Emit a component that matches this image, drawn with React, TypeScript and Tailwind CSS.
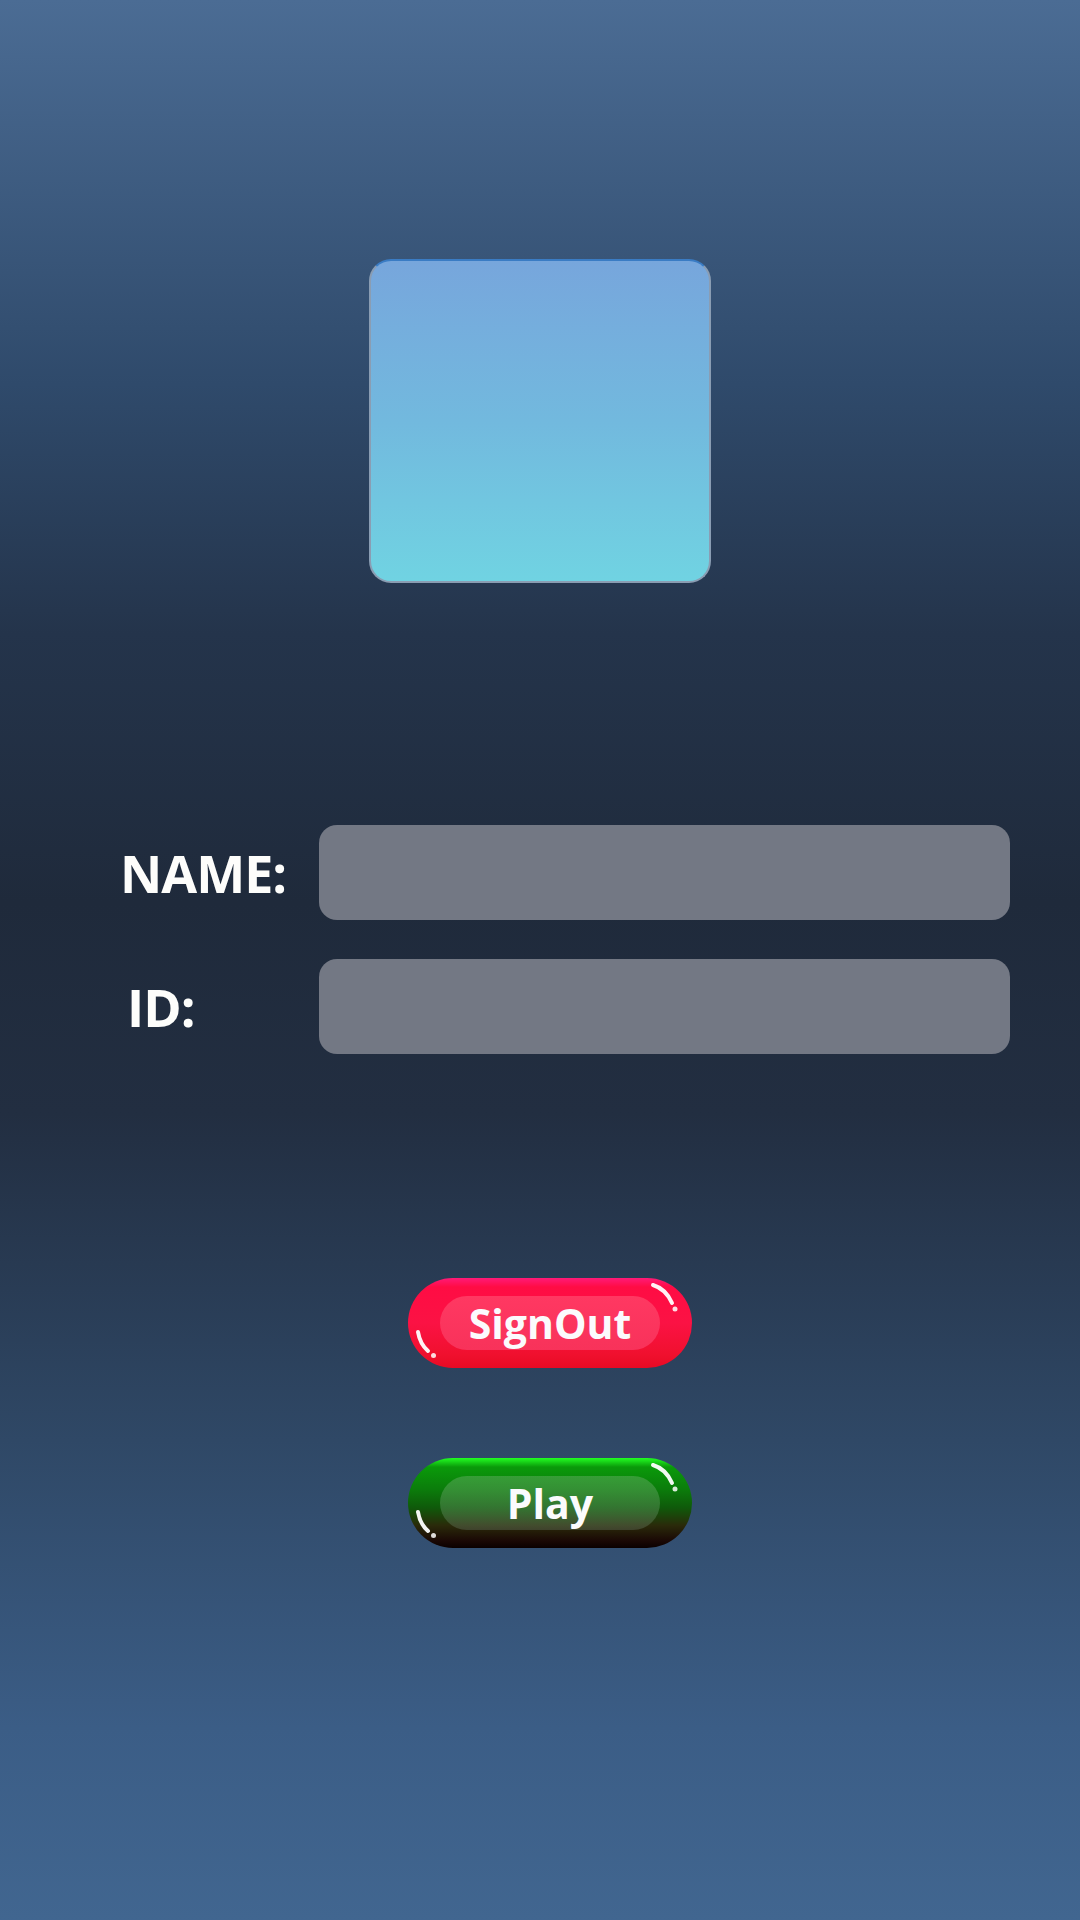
import React from 'react';

type GlossyProps = {
  label: string;
  outer: string;
  inner: string;
};

function GlossyButton({ label, outer, inner }: GlossyProps) {
  return (
    <button className={`relative w-[284px] h-[90px] rounded-full flex items-center justify-center ${outer}`}>
      <span
        className={`w-[220px] h-[54px] rounded-full flex items-center justify-center text-[41px] font-bold text-[#fbfbfd] leading-none ${inner}`}
        style={{ fontFamily: '"Open Sans", "Noto Sans", sans-serif' }}
      >
        {label}
      </span>
      <svg className="absolute inset-0 pointer-events-none" width="284" height="90" viewBox="0 0 284 90">
        <path d="M245 7 Q258 11 264 25" stroke="white" strokeWidth="4" strokeLinecap="round" fill="none" opacity="0.95" />
        <circle cx="267" cy="31" r="2.5" fill="white" opacity="0.85" />
        <path d="M10 54 Q12 66 20 73" stroke="white" strokeWidth="4" strokeLinecap="round" fill="none" opacity="0.95" />
        <circle cx="25.5" cy="77.5" r="2.5" fill="white" opacity="0.85" />
      </svg>
    </button>
  );
}

export default function App() {
  const labelFont = { fontFamily: '"Open Sans", "Noto Sans", sans-serif' };

  return (
    <div className="w-[1080px] h-[1920px] overflow-hidden flex flex-col items-center bg-[linear-gradient(180deg,#4b6c94_0%,#2f4a6b_20%,#24344b_33%,#1f2a3b_47%,#222e41_58%,#2f4866_75%,#3b5d86_90%,#416690_100%)]">
      <div className="mt-[259px] w-[342px] h-[324px] rounded-[22px] border-2 border-[#8a9db3] border-t-[#3a7cc4] bg-[linear-gradient(180deg,#77a6dc_0%,#72b9de_50%,#70d3e2_100%)]" />

      <div className="mt-[242px] w-full pl-[120px] pr-[70px] flex flex-col gap-[39px]">
        <div className="flex items-center">
          <span className="w-[199px] text-[52px] font-bold tracking-[-1px] text-[#fdfdfb] leading-none" style={labelFont}>
            NAME:
          </span>
          <div className="flex-1 h-[95px] rounded-[18px] bg-[#737884]" />
        </div>
        <div className="flex items-center">
          <span className="w-[199px] pl-[7px] text-[52px] font-bold tracking-[-1px] text-[#fdfdfb] leading-none" style={labelFont}>
            ID:
          </span>
          <div className="flex-1 h-[95px] rounded-[18px] bg-[#737884]" />
        </div>
      </div>

      <div className="mt-[224px] ml-[20px] flex flex-col gap-[90px]">
        <GlossyButton
          label="SignOut"
          outer="bg-[linear-gradient(180deg,#ff1a78_0%,#ff0c44_10%,#fb1244_50%,#f0102e_85%,#e80a24_100%)]"
          inner="bg-[linear-gradient(180deg,#ff3862_0%,#f8325a_100%)]"
        />
        <GlossyButton
          label="Play"
          outer="bg-[linear-gradient(180deg,#22ff22_0%,#0a9a0a_10%,#0b7c0b_35%,#0f5a0a_55%,#2a2a0a_75%,#1a0805_92%,#0a0000_100%)]"
          inner="bg-[linear-gradient(180deg,rgba(90,170,90,0.55)_0%,rgba(110,130,110,0.35)_100%)]"
        />
      </div>
    </div>
  );
}
